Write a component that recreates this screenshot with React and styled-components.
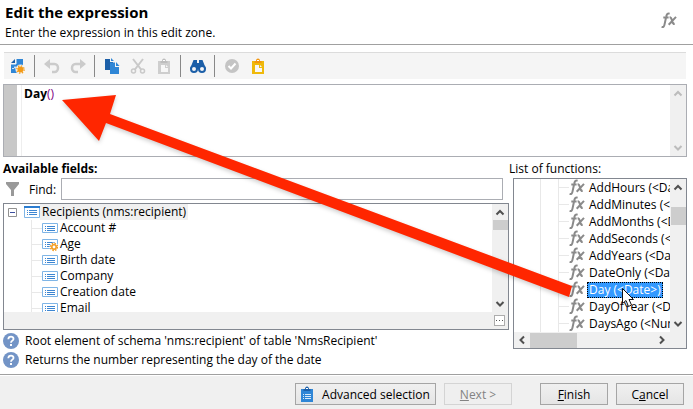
import React from "react";
import styled, { createGlobalStyle, css } from "styled-components";

const Global = createGlobalStyle`
  * { box-sizing: border-box; }
  html, body { margin: 0; background: #fff; }
  body, button, input { font-family: "Open Sans", "Noto Sans", sans-serif; font-size: 12px; color: #000; }
  svg { flex-shrink: 0; }
`;

const Dialog = styled.main`
  position: relative;
  display: flex;
  flex-direction: column;
  min-height: 100vh;
  overflow: hidden;
`;
const Header = styled.header`
  display: flex;
  justify-content: space-between;
  height: 45px;
  padding: 2px 16px 0 5px;
  border-bottom: 1px solid #a0a0a0;
`;
const Title = styled.h1`
  margin: 0 0 1px;
  font-size: 15px;
  line-height: 20px;
`;
const Subtitle = styled.p`
  margin: 0;
  line-height: 20px;
`;
const HeaderIcon = styled.span`
  padding-top: 10px;
`;
const Toolbar = styled.div`
  display: flex;
  align-items: center;
  height: 27px;
  margin: 7px 7px 5px 4px;
  padding-left: 1px;
  background: #f5f5f5;
  border-top: 1px solid #dcdcdc;
`;
const ToolButton = styled.button`
  display: grid;
  place-items: center;
  width: 26px;
  height: 24px;
  padding: 0;
  border: 0;
  background: none;
`;
const Separator = styled.span`
  width: 1px;
  height: 22px;
  margin: 0 4px 0 3px;
  background: #888;
`;
const Editor = styled.div`
  display: flex;
  height: 73px;
  margin: 0 6px 0 3px;
  border: 1px solid #abadb3;
`;
const Gutter = styled.div`
  width: 13px;
  background: #c8c8c8;
`;
const Code = styled.div`
  flex: 1;
  margin-left: 4px;
  padding-left: 2px;
  border-left: 1px solid #eee;
  font-weight: 700;
  line-height: 18px;
`;
const Paren = styled.span`
  color: #800080;
  font-weight: 400;
`;
const Columns = styled.div`
  display: flex;
  align-items: flex-start;
  gap: 4px;
  margin: 0 6px 0 3px;
`;
const FieldsPane = styled.section`
  flex: 1;
  min-width: 0;
`;
const FunctionsPane = styled.section`
  width: 174px;
`;
const PaneTitle = styled.h2`
  margin: 0 0 0 ${(p) => (p.$light ? "-4px" : "0")};
  padding-top: 2px;
  font-size: 12px;
  font-weight: ${(p) => (p.$light ? 400 : 700)};
  line-height: 19px;
`;
const FindRow = styled.div`
  display: flex;
  align-items: center;
  margin: 0 6px 3px 3px;
`;
const FindLabel = styled.label`
  width: 32px;
  margin-left: 10px;
`;
const FindInput = styled.input`
  flex: 1;
  height: 22px;
  min-width: 0;
  border: 1px solid #abadb3;
`;
const Frame = styled.div`
  display: grid;
  grid-template-columns: minmax(0, 1fr) 16px;
  grid-template-rows: ${(p) => p.$rows};
  border: 1px solid #828790;
`;
const List = styled.ul`
  margin: 0;
  padding: 0;
  list-style: none;
  overflow: hidden;
`;
const FieldRow = styled.li`
  display: flex;
  align-items: center;
  height: 16px;
  padding-left: ${(p) => (p.$root ? 4 : 27)}px;
  white-space: nowrap;
`;
const Toggle = styled.button`
  display: grid;
  place-items: center;
  width: 9px;
  height: 9px;
  margin-right: 7px;
  padding: 0;
  border: 0;
  background: none;
`;
const Branch = styled.span`
  flex-shrink: 0;
  width: 11px;
  height: 16px;
  background:
    linear-gradient(#e8e8e8, #e8e8e8) 0 0 / 1px 100% no-repeat,
    linear-gradient(#e8e8e8, #e8e8e8) 0 8px / 100% 1px no-repeat;
`;
const FieldText = styled.span`
  padding: 0 2px;
  line-height: 16px;
  background: ${(p) => (p.$marked ? "#f0f0f0" : "none")};
`;
const FunctionRow = styled.li`
  display: flex;
  align-items: center;
  height: 17px;
  padding-left: 26px;
  white-space: nowrap;
  background: linear-gradient(#e8e8e8, #e8e8e8) 26px 0 / 1px 100% no-repeat;
`;
const FunctionBranch = styled(Branch)`
  height: 17px;
  margin-left: 18px;
`;
const FunctionText = styled.span`
  margin-left: 2px;
  padding: 0 2px;
  line-height: 16px;
  ${(p) =>
    p.$selected &&
    css`
      color: #fff;
      background: #3399ff;
      outline: 1px dotted #000;
      outline-offset: -1px;
    `}
`;
const Scroll = styled.div`
  display: flex;
  flex-direction: ${(p) => (p.$row ? "row" : "column")};
  align-items: center;
  justify-content: space-between;
  background: #f0f0f0;
`;
const EditorScroll = styled(Scroll)`
  width: 16px;
`;
const Thumb = styled.span`
  width: ${(p) => p.$w}px;
  height: ${(p) => p.$h}px;
  margin: ${(p) => (p.$row ? "0 auto 0 0" : `${p.$offset || 0}px 0 auto`)};
  background: #cdcdcd;
`;
const StatusBar = styled.div`
  grid-column: 1 / -1;
  display: flex;
  align-items: center;
  justify-content: flex-end;
  padding-right: 3px;
  background: #f0f0f0;
`;
const MoreButton = styled.button`
  width: 11px;
  height: 11px;
  padding: 0;
  border: 1px solid #adadad;
  background: #fff;
  display: grid;
  place-items: center;
`;
const Help = styled.p`
  display: flex;
  align-items: center;
  gap: 6px;
  height: 19px;
  margin: 0;
`;
const HelpGroup = styled.div`
  padding-top: 1px;
`;
const Footer = styled.footer`
  display: flex;
  justify-content: flex-end;
  gap: 8px;
  flex: 1;
  margin-top: 5px;
  padding: 8px 9px 4px;
  background: #f0f0f0;
  border-top: 1px solid #a0a0a0;
  box-shadow: inset 0 1px #fff;
`;
const Button = styled.button`
  display: flex;
  align-items: center;
  justify-content: center;
  gap: 9px;
  width: ${(p) => (p.$wide ? 141 : 68)}px;
  height: 22px;
  margin-right: ${(p) => (p.$apart ? 20 : 0)}px;
  padding: 0;
  border: 1px solid #a5a5a5;
  background: linear-gradient(#f0f0f0, #e5e5e5);
  white-space: nowrap;
  &:disabled {
    color: #838383;
    border-color: #d4d4d4;
    background: #efefef;
  }
`;
const Overlay = styled.svg`
  position: absolute;
  top: 0;
  left: 0;
  pointer-events: none;
`;
const ArrowShape = styled.path`
  filter: drop-shadow(0 2px 2px rgba(0, 0, 0, 0.2));
`;

const Icon = ({ children, w = 16, h = 16 }) => (
  <svg width={w} height={h} viewBox={`0 0 ${w} ${h}`} fill="none" aria-hidden="true">
    {children}
  </svg>
);

const FxIcon = () => (
  <Icon w={16} h={17}>
    <path d="M8.600 1.700C6.500 1 5.700 2.200 5.300 4.300L3.500 12.600c-.4 2-1.200 2.800-2.900 2.300M2.300 5.400h5.300" stroke="#8a8a8a" strokeWidth="2" />
    <path d="M8.600 5.200c1.500 0 1.900 1 2.300 3 .5 2.300.8 4 2.800 3.900M15 4.900 7.700 12.800" stroke="#8a8a8a" strokeWidth="2" />
  </Icon>
);

const chevrons = {
  up: "M4.500 10.500 8 7l3.500 3.500",
  down: "M4.500 6 8 9.500 11.500 6",
  left: "M10 4.500 6.500 8 10 11.500",
  right: "M6 4.500 9.500 8 6 11.500",
};
const Chevron = ({ d, light }) => (
  <Icon>
    <path d={chevrons[d]} stroke={light ? "#bcbcbc" : "#505050"} strokeWidth="2" />
  </Icon>
);

const TableIcon = ({ root, gear }) => (
  <Icon>
    <path d={root ? "M.5 3.500h15v10H.5z" : "M.5 3.500h15v9H.5z"} fill="#fff" stroke="#7fb5e6" />
    {root && <path d="M0 2h16v2H0z" fill="#2b7cd0" />}
    <path d="M3 6.500h1M3 8.500h1M3 10.500h1M5 6.500h8M5 8.500h8M5 10.500h8" stroke="#3d86d2" />
    {gear && (
      <>
        <circle cx="12" cy="11" r="4.500" fill="#fff" />
        <circle cx="12" cy="11" r="3.500" stroke="#f19a1d" strokeWidth="1.500" strokeDasharray="1.500 1.250" />
        <circle cx="12" cy="11" r="2.200" stroke="#f19a1d" strokeWidth="1.500" fill="#fff" />
      </>
    )}
  </Icon>
);

const PasteIcon = ({ a, b }) => (
  <Icon>
    <path d="M2 3h12v13H2z" fill={a} />
    <path d="M4.500 5V3H6C6-.3 10-.3 10 3h1.500v2z" fill={b} />
    <path d="M7 2h2v1H7z" fill="#fff" />
    <path d="M5 7h4v3h3v4H5z" fill="#f7f7f7" />
    <path d="M10 7v2h2z" fill="#f7f7f7" />
  </Icon>
);

const NewIcon = () => (
  <Icon>
    <path d="M6 1h7v8H8v6H1V6h5z" fill="#2f86d6" />
    <path d="M5 1v4H1z" fill="#1a5fa8" />
    <path d="M6 1v5H1" stroke="#f5f5f5" />
    <path d="M2 10.500h2l1-2 1.500 3" stroke="#cfe4f7" />
    <circle cx="10.500" cy="11.500" r="5" fill="#f5f5f5" />
    <circle cx="10.500" cy="11.500" r="3" fill="#f39a16" />
    <circle cx="10.500" cy="11.500" r="3.700" stroke="#f39a16" strokeWidth="1.300" strokeDasharray="1.400 1.500" />
  </Icon>
);
const UndoIcon = ({ redo }) => (
  <Icon>
    <g transform={redo ? "translate(16 0) scale(-1 1)" : undefined}>
      <path d="M0 6 6 1v10z" fill="#cbcbcb" />
      <path d="M5 6h5.500a3.500 4 0 0 1 0 8H8" stroke="#cbcbcb" strokeWidth="2.500" />
    </g>
  </Icon>
);
const CopyIcon = () => (
  <Icon>
    <path d="M1 1h5v3h3v8H1z" fill="#1c5fa8" />
    <path d="M6 4.500h5V9h4v7H6z" fill="#2f86d6" />
    <path d="M12 4v4h3.500zM7 0v3h3z" fill="#2f86d6" />
  </Icon>
);
const CutIcon = () => (
  <Icon>
    <path d="M3 1l8.500 11M13 1 4.500 12" stroke="#c9c9c9" strokeWidth="2" />
    <circle cx="3.500" cy="13" r="2" stroke="#c9c9c9" strokeWidth="1.500" />
    <circle cx="12.500" cy="13" r="2" stroke="#c9c9c9" strokeWidth="1.500" />
  </Icon>
);
const FindIcon = () => (
  <Icon>
    <path d="M3.500 2H7v3h2V2h3.500L16 11H0z" fill="#1c5fa8" />
    <circle cx="4" cy="11" r="3" fill="#f5f5f5" stroke="#1c5fa8" strokeWidth="2" />
    <circle cx="12" cy="11" r="3" fill="#f5f5f5" stroke="#1c5fa8" strokeWidth="2" />
  </Icon>
);
const CheckIcon = () => (
  <Icon>
    <circle cx="8" cy="8" r="7" fill="#c4c4c4" />
    <path d="m4.500 8 2.500 2.500L11.500 5.500" stroke="#fff" strokeWidth="2" />
  </Icon>
);
const FilterIcon = () => (
  <Icon w={13} h={15}>
    <path d="M0 0h13v2L8 8v6H5V8L0 2z" fill="#999" />
  </Icon>
);
const ExpandIcon = () => (
  <Icon w={9} h={9}>
    <path d="M.5.5h8v8h-8z" fill="#fff" stroke="#919191" />
    <path d="M2 4.500h5" stroke="#3c4f9f" />
  </Icon>
);
const HelpIcon = () => (
  <Icon>
    <circle cx="8" cy="8" r="8" fill="#7394c6" />
    <path d="M5.300 6.200C5.500 2.800 10.700 3 10.500 6 10.400 7.700 8 7.600 8 9.700" stroke="#fff" strokeWidth="1.800" />
    <path d="M7 11h2v2H7z" fill="#fff" />
  </Icon>
);
const ClipboardIcon = () => (
  <Icon w={12} h={16}>
    <path d="M0 3h12v13H0z" fill="#2f86d6" />
    <path d="M2.500 5V3H4c0-3.500 4-3.500 4 0h1.500v2z" fill="#1c5fa8" />
    <path d="M5 2h2v1H5z" fill="#fff" />
    <path d="M2 8.500h1M4 8.500h6M2 10.500h1M4 10.500h6M2 12.500h1M4 12.500h6" stroke="#d8eafa" />
  </Icon>
);

const tools = [
  ["New", <NewIcon />], null,
  ["Undo", <UndoIcon />], ["Redo", <UndoIcon redo />], null,
  ["Copy", <CopyIcon />], ["Cut", <CutIcon />], ["Paste", <PasteIcon a="#cecece" b="#bdbdbd" />], null,
  ["Search", <FindIcon />], null,
  ["Validate", <CheckIcon />], ["Paste expression", <PasteIcon a="#efb90b" b="#f2960f" />],
];
const fields = ["Account #", "Age", "Birth date", "Company", "Creation date", "Email"];
const functions = [
  "AddHours (<Date>, <Number>)", "AddMinutes (<Date>, <Number>)", "AddMonths (<Date>, <Number>)",
  "AddSeconds (<Date>, <Number>)", "AddYears (<Date>, <Number>)", "DateOnly (<Date>)", "Day (<Date>)",
  "DayOfYear (<Date>)", "DaysAgo (<Number>)",
];

export default function App() {
  return (
    <Dialog>
      <Global />
      <Header>
        <div>
          <Title>Edit the expression</Title>
          <Subtitle>Enter the expression in this edit zone.</Subtitle>
        </div>
        <HeaderIcon><FxIcon /></HeaderIcon>
      </Header>
      <Toolbar role="toolbar">
        {tools.map((t, i) => t ? <ToolButton key={i} aria-label={t[0]}>{t[1]}</ToolButton> : <Separator key={i} />)}
      </Toolbar>
      <Editor>
        <Gutter />
        <Code role="textbox" aria-label="Expression" contentEditable suppressContentEditableWarning>Day<Paren>()</Paren></Code>
        <EditorScroll><Chevron d="up" light /><Chevron d="down" light /></EditorScroll>
      </Editor>
      <Columns>
        <FieldsPane>
          <PaneTitle>Available fields:</PaneTitle>
          <FindRow>
            <FilterIcon />
            <FindLabel htmlFor="find">Find:</FindLabel>
            <FindInput id="find" />
          </FindRow>
          <Frame $rows="108px 17px">
            <List>
              <FieldRow $root>
                <Toggle aria-label="Collapse"><ExpandIcon /></Toggle>
                <TableIcon root />
                <FieldText $marked>Recipients (nms:recipient)</FieldText>
              </FieldRow>
              {fields.map((f) => (
                <FieldRow key={f}><Branch /><TableIcon gear={f === "Age"} /><FieldText>{f}</FieldText></FieldRow>
              ))}
            </List>
            <Scroll><Chevron d="up" /><Thumb $w={15} $h={10} /><Chevron d="down" /></Scroll>
            <StatusBar>
              <MoreButton aria-label="More"><Icon w={9} h={3}><path d="M1 1.500h7" stroke="#555" strokeDasharray="1 2" /></Icon></MoreButton>
            </StatusBar>
          </Frame>
          <HelpGroup>
            <Help><HelpIcon />Root element of schema 'nms:recipient' of table 'NmsRecipient'</Help>
            <Help><HelpIcon />Returns the number representing the day of the date</Help>
          </HelpGroup>
        </FieldsPane>
        <FunctionsPane>
          <PaneTitle $light>List of functions:</PaneTitle>
          <Frame $rows="153px 16px">
            <List>
              {functions.map((f) => (
                <FunctionRow key={f}><FunctionBranch /><FxIcon /><FunctionText $selected={f.startsWith("Day (")}>{f}</FunctionText></FunctionRow>
              ))}
            </List>
            <Scroll><Chevron d="up" /><Thumb $w={15} $h={18} $offset={12} /><Chevron d="down" /></Scroll>
            <Scroll $row><Chevron d="left" /><Thumb $row $w={47} $h={15} /><Chevron d="right" /></Scroll>
            <Scroll />
          </Frame>
        </FunctionsPane>
      </Columns>
      <Footer>
        <Button $wide><ClipboardIcon />Advanced selection</Button>
        <Button disabled $apart><span><u>N</u>ext &gt;</span></Button>
        <Button><span><u>F</u>inish</span></Button>
        <Button><span>C<u>a</u>ncel</span></Button>
      </Footer>
      <Overlay width="693" height="409" aria-hidden="true">
        <ArrowShape d="M62 100 116 95 110 114 572 286 569 297 106 123 99 141z" fill="#ff2600" />
        <path d="M622.500 288.500v15l3.500-3 2.500 6 3-1.500-2.500-5.500h4.500z" fill="#fff" stroke="#111" />
      </Overlay>
    </Dialog>
  );
}
